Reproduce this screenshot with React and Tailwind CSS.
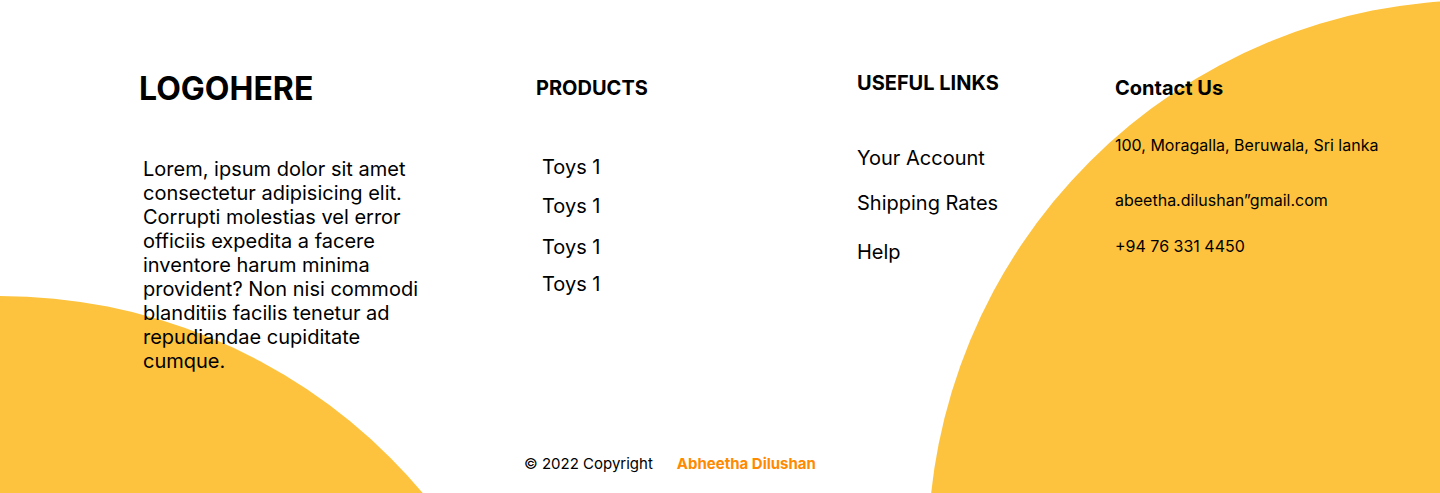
export default function App() {
  return (
    <div className="relative h-[493px] w-[1440px] overflow-hidden bg-white font-['Inter',sans-serif] text-black">
      <div className="absolute left-[928px] top-0 h-[1104px] w-[1104px] rounded-full bg-[#FDC33E]" />
      <div className="absolute left-[-552px] top-[296px] h-[1104px] w-[1104px] rounded-full bg-[#FDC33E]" />

      <div className="relative flex h-[454px] pl-[139px]">
        <div className="flex w-[397px] flex-col pt-[69px]">
          <div className="text-[32px] font-bold leading-[40px]">LOGOHERE</div>
          <p className="mt-[48px] w-[286px] pl-[4px] text-[20px] leading-[24px]">
            Lorem, ipsum dolor sit amet consectetur adipisicing elit. Corrupti molestias vel error officiis expedita a facere inventore harum minima provident? Non nisi commodi blanditiis facilis tenetur ad repudiandae cupiditate cumque.
          </p>
        </div>

        <div className="flex w-[321px] flex-col pt-[76px]">
          <div className="text-[20px] font-bold leading-[24px]">PRODUCTS</div>
          <ul className="flex flex-col pl-[6px] text-[20px] leading-[24px]">
            <li className="mt-[55px]">Toys 1</li>
            <li className="mt-[15px]">Toys 1</li>
            <li className="mt-[17px]">Toys 1</li>
            <li className="mt-[13px]">Toys 1</li>
          </ul>
        </div>

        <div className="flex w-[258px] flex-col pt-[71px]">
          <div className="text-[20px] font-bold leading-[24px]">USEFUL LINKS</div>
          <ul className="flex flex-col text-[20px] leading-[24px]">
            <li className="mt-[51px]">Your Account</li>
            <li className="mt-[21px]">Shipping Rates</li>
            <li className="mt-[25px]">Help</li>
          </ul>
        </div>

        <div className="flex flex-col pt-[76px]">
          <div className="text-[20px] font-bold leading-[24px]">Contact Us</div>
          <ul className="flex flex-col text-[16px] leading-[20px]">
            <li className="mt-[35px]">100, Moragalla, Beruwala, Sri lanka</li>
            <li className="mt-[35px]">abeetha.dilushan”gmail.com</li>
            <li className="mt-[26px]">+94 76 331 4450</li>
          </ul>
        </div>
      </div>

      <div className="relative flex items-center gap-[24px] pl-[524px] text-[15px] leading-[20px]">
        <span>© 2022 Copyright</span>
        <span className="font-bold text-[#FF8A00]">Abheetha Dilushan</span>
      </div>
    </div>
  );
}
